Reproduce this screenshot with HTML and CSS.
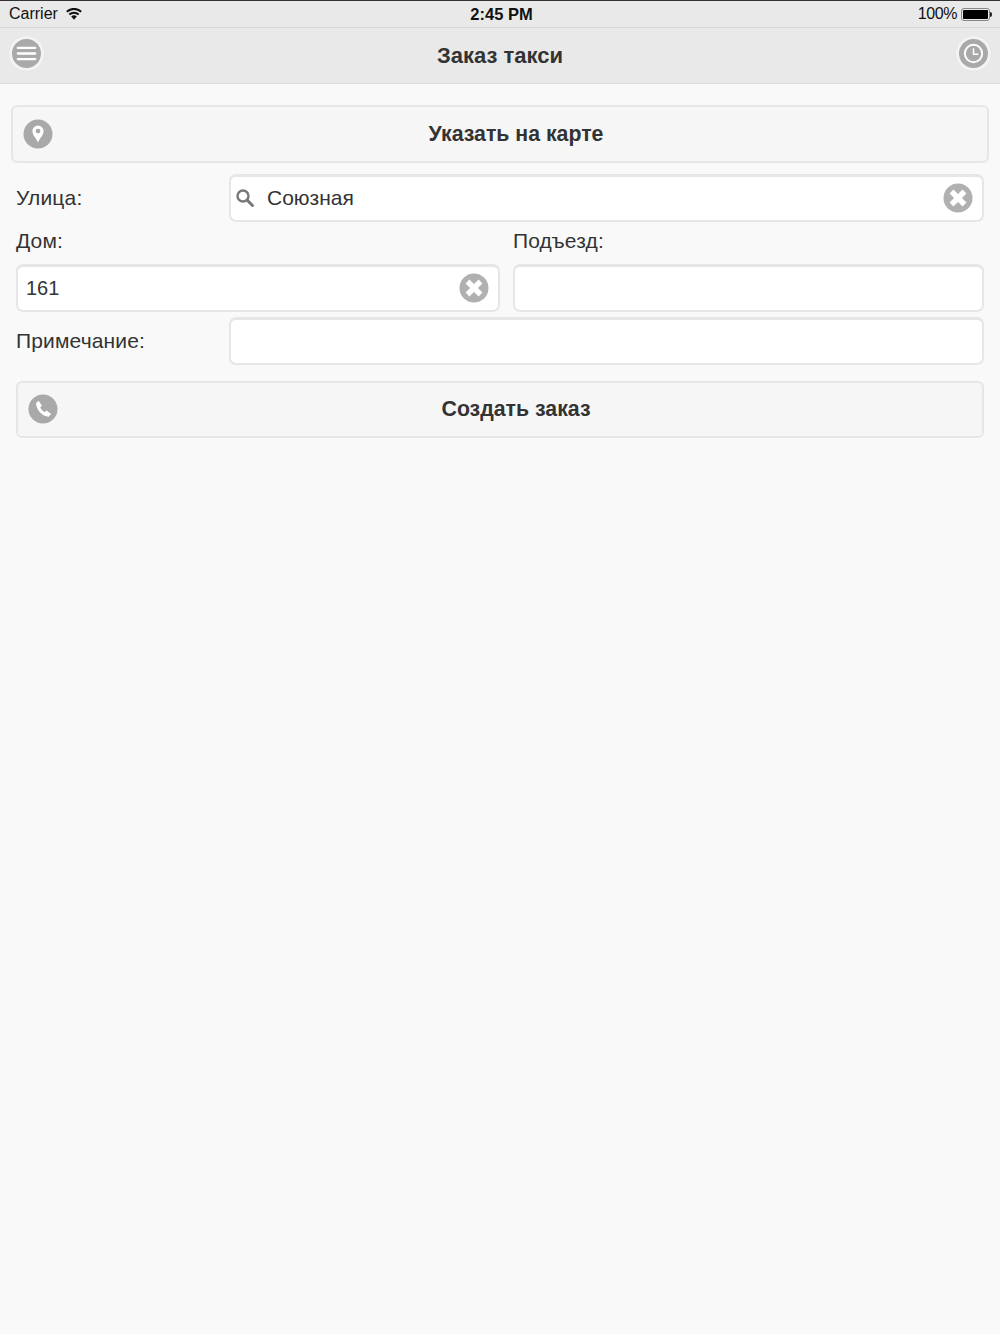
FILE: index.html
```html
<!DOCTYPE html>
<html>
<head>
    <title>Заказ такси</title>
    <link rel="stylesheet" href="styles.css">
</head>
<body>
    <div class="status-bar">
        <div class="status-left">
            <span>Carrier</span>
            <svg class="wifi" width="16" height="12" viewBox="0 0 16 12">
                <path d="M8 11.8 5.2 8.6a4 4 0 0 1 5.600 0z" fill="#111"/>
                <path d="M3.300 6.500a7 7 0 0 1 9.400 0" fill="none" stroke="#111" stroke-width="2"/>
                <path d="M.8 3.700a10.600 10.600 0 0 1 14.400 0" fill="none" stroke="#111" stroke-width="2"/>
            </svg>
        </div>
        <div class="status-time">2:45 PM</div>
        <div class="status-right">
            <span>100%</span>
            <div class="battery"><div class="battery-fill"></div></div>
            <div class="battery-tip"></div>
        </div>
    </div>

    <header class="nav">
        <div class="nav-btn">
            <svg width="29" height="29" viewBox="0 0 30 30">
                <circle cx="15" cy="15" r="15" fill="#a9a9a9"/>
                <path d="M6 9.200h18M6 15h18M6 20.800h18" stroke="#fff" stroke-width="2.400" stroke-linecap="round"/>
            </svg>
        </div>
        <h1>Заказ такси</h1>
        <div class="nav-btn">
            <svg width="29" height="29" viewBox="0 0 30 30">
                <circle cx="15" cy="15" r="15" fill="#a9a9a9"/>
                <circle cx="15" cy="15" r="9" fill="none" stroke="#fff" stroke-width="2"/>
                <path d="M15 9.500V15.700H20" fill="none" stroke="#fff" stroke-width="1.500"/>
            </svg>
        </div>
    </header>

    <div class="content">
        <div class="btn btn-map">
            <svg class="btn-icon" width="30" height="30" viewBox="0 0 30 30">
                <circle cx="15" cy="15" r="14.500" fill="#a9a9a9"/>
                <path fill-rule="evenodd" fill="#fff" d="M15 23.800c-1-3.600-5.600-7.400-5.600-11.700a5.600 5.600 0 0 1 11.200 0c0 4.300-4.600 8.100-5.600 11.700zM15 9.700a2.400 2.400 0 1 0 0 4.800 2.400 2.400 0 0 0 0-4.800z"/>
            </svg>
            Указать на карте
        </div>

        <div class="form">
            <div class="row row-street">
                <label>Улица:</label>
                <div class="field">
                    <svg class="search" width="20" height="20" viewBox="0 0 20 20">
                        <circle cx="8" cy="8" r="5.500" fill="none" stroke="#777" stroke-width="2.400"/>
                        <path d="M12 12l5.500 5.500" stroke="#777" stroke-width="3" stroke-linecap="round"/>
                    </svg>
                    <span class="value">Союзная</span>
                    <svg class="clear" width="30" height="30" viewBox="0 0 30 30">
                        <circle cx="15" cy="15" r="14.500" fill="#b0b0b0"/>
                        <path d="M8.500 8.500l13 13M21.500 8.500l-13 13" stroke="#fff" stroke-width="5.500"/>
                    </svg>
                </div>
            </div>

            <div class="row-split">
                <div class="col">
                    <label>Дом:</label>
                    <div class="field">
                        <span class="value value-num">161</span>
                        <svg class="clear" width="30" height="30" viewBox="0 0 30 30">
                            <circle cx="15" cy="15" r="14.500" fill="#b0b0b0"/>
                            <path d="M8.500 8.500l13 13M21.500 8.500l-13 13" stroke="#fff" stroke-width="5.500"/>
                        </svg>
                    </div>
                </div>
                <div class="col">
                    <label>Подъезд:</label>
                    <div class="field"></div>
                </div>
            </div>

            <div class="row row-note">
                <label>Примечание:</label>
                <div class="field"></div>
            </div>

            <div class="btn btn-order">
                <svg class="btn-icon" width="30" height="30" viewBox="0 0 30 30">
                    <circle cx="15" cy="15" r="14.500" fill="#a9a9a9"/>
                    <path fill="#fff" d="M8 9.200l2.600-2.400 3.300 4.700-1.600 1.900c.9 2 2.500 3.700 4.500 4.700l1.900-1.600 4.400 3.500-2.500 2.800c-6.300-.6-12.200-6.800-12.600-13.600z"/>
                </svg>
                Создать заказ
            </div>
        </div>
    </div>
</body>
</html>
```

FILE: styles.css
```css
html, body {
    height: 100%;
}

body {
    font-family: "Liberation Sans", Arial, sans-serif;
    background-color: #f9f9f9;
    color: #333;
    margin: 0;
    padding: 0;
    border-top: 1px solid #333;
    box-sizing: border-box;
}

.status-bar {
    display: grid;
    grid-template-columns: 1fr auto 1fr;
    align-items: center;
    height: 26px;
    padding: 0 8px 0 9px;
    background-color: #e9e9e9;
    border-bottom: 1px solid #d8d8d8;
    color: #111;
    font-size: 16px;
}

.status-left {
    display: flex;
    align-items: center;
    gap: 8px;
}

.status-time {
    font-weight: bold;
    font-size: 16.500px;
    padding-left: 2px;
}

.status-right {
    display: flex;
    align-items: center;
    justify-content: flex-end;
    letter-spacing: -0.400px;
}

.battery {
    width: 29px;
    height: 13px;
    margin-left: 4px;
    padding: 1px;
    box-sizing: border-box;
    border: 1px solid #888;
    border-radius: 3px;
}

.battery-fill {
    height: 100%;
    background-color: #000;
    border-radius: 1px;
}

.battery-tip {
    width: 2px;
    height: 5px;
    background-color: #222;
    border-radius: 0 2px 2px 0;
}

.nav {
    display: flex;
    justify-content: space-between;
    align-items: center;
    height: 56px;
    padding: 0 8px 4px 8px;
    box-sizing: border-box;
    background-color: #e9e9e9;
    border-bottom: 1px solid #dddddd;
}

.nav h1 {
    margin: 4px 0 0 0;
    font-size: 22px;
    font-weight: bold;
}

.nav-btn {
    width: 37px;
    height: 37px;
    display: flex;
    align-items: center;
    justify-content: center;
    box-sizing: border-box;
    border-radius: 50%;
    background-color: #f3f3f3;
    border: 1px solid #e6e6e6;
}

.content {
    padding: 21px 11px 0 11px;
}

.btn {
    position: relative;
    display: flex;
    align-items: center;
    justify-content: center;
    box-sizing: border-box;
    padding-left: 32px;
    background-color: #f6f6f6;
    border: 2px solid #e6e6e6;
    border-radius: 6px;
    font-size: 21.300px;
    font-weight: bold;
}

.btn-map {
    height: 58px;
}

.btn-order {
    height: 57px;
    margin-top: 16px;
}

.btn-icon {
    position: absolute;
    left: 10px;
    top: 12px;
}

.btn-order .btn-icon {
    top: 11px;
}

.form {
    padding: 0 5px;
}

.row {
    display: grid;
    grid-template-columns: 213px 1fr;
    align-items: center;
}

.row-street {
    margin-top: 11px;
}

.row-note {
    margin-top: 5px;
}

.row-split {
    display: grid;
    grid-template-columns: 484px 471px;
    column-gap: 13px;
    margin-top: 7px;
}

.col label {
    display: block;
    height: 35px;
    line-height: 23px;
}

label {
    font-size: 21px;
    color: #333;
    letter-spacing: 0.150px;
}

.field {
    display: flex;
    align-items: center;
    height: 48px;
    box-sizing: border-box;
    padding: 0 9px 2px 8px;
    background-color: #fff;
    border: 2px solid #e6e6e6;
    border-top-width: 3px;
    border-radius: 7px;
}

.search {
    margin: 0 12px 0 -4px;
}

.value {
    flex: 1;
    font-size: 21px;
    color: #333;
}

.value-num {
    font-size: 20px;
    padding-top: 2px;
}

.clear {
    flex: none;
}
```
